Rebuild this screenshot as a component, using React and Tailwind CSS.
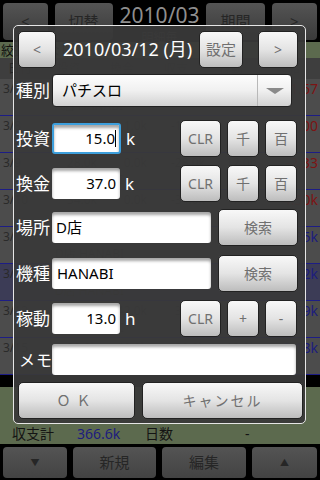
import React from 'react'

const rows = [
  { d: '3/7', a: '10.0k', b: '0.0k', c: '-10.0k', h: '6.0h', v: '-1.67', shop: 'A店 HANABI', neg: true },
  { d: '3/8', a: '12.0k', b: '1.0k', c: '-11.0k', h: '11.0h', v: '-1.00', shop: 'A店 HANABI', neg: true },
  { d: '3/9', a: '28.0k', b: '0.0k', c: '-28.0k', h: '12.0h', v: '-2.33', shop: 'B店 HANABI', neg: true },
  { d: '3/10', a: '34.0k', b: '0.0k', c: '-34.0k', h: '7.0h', v: '-4.50k', shop: 'C店 HANABI', neg: true },
  { d: '3/11', a: '15.0k', b: '56.0k', c: '41.0k', h: '12.0h', v: '3.35k', shop: 'D店 HANABI' },
  { d: '3/12', a: '15.0k', b: '37.0k', c: '22.0k', h: '13.0h', v: '1.92k', shop: 'D店 HANABI', sel: true },
  { d: '3/13', a: '8.0k', b: '42.0k', c: '34.0k', h: '9.0h', v: '3.59k', shop: 'D店 HANABI' },
  { d: '3/15', a: '20.0k', b: '49.0k', c: '29.0k', h: '13.0h', v: '2.18k', shop: 'D店 HANABI' },
]

function DimBtn({ children, className }) {
  return (
    <div className={`flex items-center justify-center rounded-[4px] bg-gradient-to-b from-[#545454] to-[#3a3a3a] text-[#262626] ${className}`}>
      {children}
    </div>
  )
}

function Btn({ children, className }) {
  return (
    <div className={`flex items-center justify-center rounded-[5px] border border-[#222] bg-gradient-to-b from-[#f8f8f8] via-[#e4e4e4] to-[#bdbdbd] text-[14px] text-[#707070] ${className}`}>
      {children}
    </div>
  )
}

function Field({ children, className }) {
  return (
    <div className={`flex items-center h-[31px] rounded-[3px] bg-white shadow-[inset_0_3px_3px_rgba(0,0,0,0.35)] text-[15px] text-black ${className}`}>
      {children}
    </div>
  )
}

function Label({ children }) {
  return <div className="w-[38px] shrink-0 pl-[2px] text-[17px] leading-none text-white whitespace-nowrap">{children}</div>
}

export default function App() {
  return (
    <div className="relative w-[320px] h-[480px] overflow-hidden bg-black font-['Noto_Sans','Noto_Sans_CJK_JP',sans-serif]">
      {/* background app, dimmed */}
      <div className="flex flex-col h-full">
        <div className="flex h-[42px] px-[3px] pt-[3px] pb-[2px] gap-[7px]">
          <DimBtn className="w-[46px] text-[15px]">&lt;</DimBtn>
          <DimBtn className="w-[60px] text-[15px]">切替</DimBtn>
          <div className="flex-1 flex flex-col items-center leading-none">
            <span className="text-[21px] text-[#8e8e8e] mt-[2px]">2010/03</span>
            <span className="text-[12px] text-[#3c3c3c] mt-[6px]">明細毎</span>
          </div>
          <DimBtn className="w-[60px] text-[15px]">期間</DimBtn>
          <DimBtn className="w-[47px] text-[15px]">&gt;</DimBtn>
        </div>
        <div className="h-[16px] bg-[#5c6a4e] text-[13px] leading-[16px] text-[#111] pl-[1px]">絞込み: なし</div>
        <div className="grid grid-cols-[40px_57px_50px_58px_52px_1fr] h-[21px] bg-[#3e3e3e] text-[12px] leading-[21px] text-[#262626] text-center">
          <span>日付</span><span>投資</span><span>換金</span><span>収支</span><span>稼動</span><span>時給</span>
        </div>
        {rows.map((r, i) => (
          <div key={i} className={`h-[37px] shrink-0 border-b border-[#1d1d86] text-[12px] leading-[15px] ${r.sel ? 'bg-[#3c3c56]' : 'bg-[#4c4c4c]'}`}>
            <div className="grid grid-cols-[40px_57px_50px_58px_52px_1fr] pt-[2px] text-[#2a2a2a]">
              <span className="pl-[3px]">{r.d}</span>
              <span className="text-right">{r.a}</span>
              <span className="text-right">{r.b}</span>
              <span className="text-right">{r.c}</span>
              <span className="text-right">{r.h}</span>
              <span className={`text-right pr-[2px] text-[14px] ${r.neg ? 'text-[#7c1414]' : 'text-[#1c1c7e]'}`}>{r.v}</span>
            </div>
            <div className="pl-[55px] pt-[2px] text-[#2e2e2e]">{r.shop}</div>
          </div>
        ))}
        <div className="h-[12px] bg-black" />
        <div className="h-[57px] bg-[#5c6a4e] flex flex-col justify-end pb-[1px] text-[14px] leading-[18px] text-[#141414]">
          <div className="flex pl-[12px]">
            <span className="w-[65px]">収支計</span>
            <span className="w-[68px] text-[#1c1c7e]">366.6k</span>
            <span className="w-[100px]">日数</span>
            <span>-</span>
          </div>
        </div>
        <div className="flex flex-1 gap-[6px] px-[3px] pt-[3px] pb-[2px]">
          <DimBtn className="w-[64px] text-[9px] bg-gradient-to-b from-[#5e5e5e] to-[#434343]">▼</DimBtn>
          <DimBtn className="w-[83px] text-[15px] bg-gradient-to-b from-[#5e5e5e] to-[#434343]">新規</DimBtn>
          <DimBtn className="w-[84px] text-[15px] bg-gradient-to-b from-[#5e5e5e] to-[#434343]">編集</DimBtn>
          <DimBtn className="flex-1 text-[9px] bg-gradient-to-b from-[#5e5e5e] to-[#434343]">▲</DimBtn>
        </div>
      </div>

      {/* dialog */}
      <div className="absolute left-[13px] top-[25px] w-[293px] h-[399px] rounded-[5px] border-[1.5px] border-[#e6e6e6] bg-[#393939]/[0.94] flex flex-col">
        <div className="flex items-center h-[37px] mt-[5px] pl-[4px]">
          <Btn className="w-[38px] h-[37px] text-[13px]">&lt;</Btn>
          <span className="ml-[7px] text-[18px] text-white whitespace-nowrap">2010/03/12 (月)</span>
          <Btn className="ml-auto w-[44px] h-[37px] text-[15px]">設定</Btn>
          <Btn className="ml-[15px] mr-[7px] w-[40px] h-[37px] text-[13px]">&gt;</Btn>
        </div>

        <div className="flex items-center h-[37px] mt-[4px]">
          <Label>種別</Label>
          <div className="flex items-center w-[240px] h-[33px] rounded-[4px] border border-[#222] bg-gradient-to-b from-[#fdfdfd] via-[#f0f0f0] to-[#d2d2d2]">
            <span className="flex-1 pl-[9px] text-[15px] text-black">パチスロ</span>
            <div className="h-full w-px bg-[#b8b8b8]" />
            <div className="w-[33px] flex justify-center">
              <svg width="18" height="6" viewBox="0 0 18 6"><path d="M0 0h18L9 6z" fill="#8a8a8a" /></svg>
            </div>
          </div>
        </div>

        <div className="flex items-center h-[37px] mt-[11px]">
          <Label>投資</Label>
          <Field className="w-[69px] justify-end pr-[3px] border-2 border-[#3d9fdc]">
            <span>15.0</span><span className="w-px h-[17px] bg-black" />
          </Field>
          <span className="ml-[5px] text-[17px] text-white">k</span>
          <Btn className="ml-auto w-[41px] h-[37px]">CLR</Btn>
          <Btn className="ml-[6px] w-[32px] h-[37px]">千</Btn>
          <Btn className="ml-[6px] mr-[8px] w-[32px] h-[37px]">百</Btn>
        </div>

        <div className="flex items-center h-[37px] mt-[8px]">
          <Label>換金</Label>
          <Field className="w-[68px] justify-end pr-[4px]">37.0</Field>
          <span className="ml-[5px] text-[17px] text-white">k</span>
          <Btn className="ml-auto w-[41px] h-[37px]">CLR</Btn>
          <Btn className="ml-[6px] w-[32px] h-[37px]">千</Btn>
          <Btn className="ml-[6px] mr-[8px] w-[32px] h-[37px]">百</Btn>
        </div>

        <div className="flex items-center h-[37px] mt-[7px]">
          <Label>場所</Label>
          <Field className="w-[159px] pl-[4px]">D店</Field>
          <Btn className="ml-auto mr-[7px] w-[80px] h-[37px]">検索</Btn>
        </div>

        <div className="flex items-center h-[37px] mt-[9px]">
          <Label>機種</Label>
          <Field className="w-[159px] pl-[5px]">HANABI</Field>
          <Btn className="ml-auto mr-[7px] w-[80px] h-[37px]">検索</Btn>
        </div>

        <div className="flex items-center h-[37px] mt-[8px]">
          <Label>稼動</Label>
          <Field className="w-[68px] justify-end pr-[4px]">13.0</Field>
          <span className="ml-[5px] text-[17px] text-white">h</span>
          <Btn className="ml-auto w-[41px] h-[37px]">CLR</Btn>
          <Btn className="ml-[6px] w-[32px] h-[37px]">+</Btn>
          <Btn className="ml-[6px] mr-[8px] w-[32px] h-[37px]">-</Btn>
        </div>

        <div className="flex items-center h-[37px] mt-[4px]">
          <Label><span className="pl-[3px] text-[16px] tracking-[1px]">メモ</span></Label>
          <Field className="w-[244px]" />
        </div>

        <div className="flex items-center h-[37px] mt-[4px] pl-[4px] pr-[2px] gap-[7px]">
          <Btn className="w-[117px] h-[37px] tracking-[6px]">ＯＫ</Btn>
          <Btn className="flex-1 h-[37px] tracking-[2px]">キャンセル</Btn>
        </div>
      </div>
    </div>
  )
}
